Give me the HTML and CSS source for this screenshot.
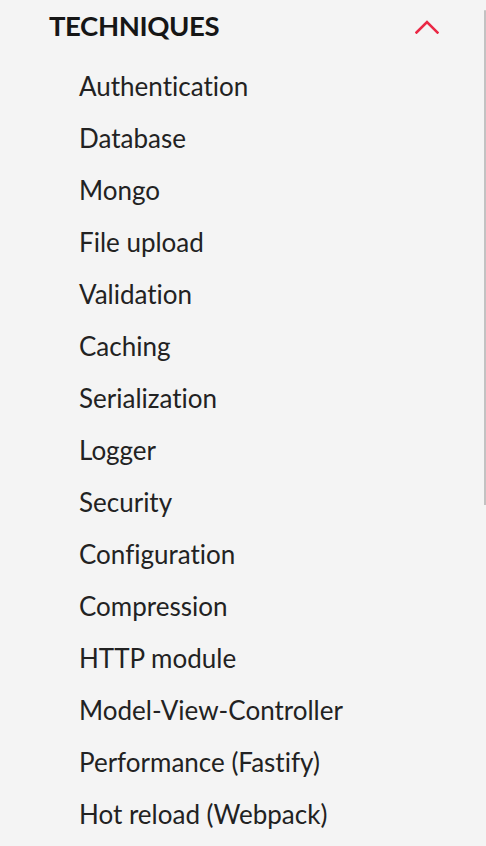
FILE: index.html
```html
<!DOCTYPE html>
<html lang="en">
<head>
<meta charset="utf-8">
<title>Techniques</title>
<link rel="stylesheet" href="styles.css">
</head>
<body>
<nav class="sidebar">
  <div class="section-head">
    <span class="section-title">TECHNIQUES</span>
    <svg class="chevron" width="24" height="14" viewBox="0 0 24 14" aria-hidden="true">
      <polyline points="1.5,12.5 12,2 22.5,12.5" fill="none" stroke="#ea2845" stroke-width="2.6" stroke-linecap="square"/>
    </svg>
  </div>
  <ul class="items">
    <li>Authentication</li>
    <li>Database</li>
    <li>Mongo</li>
    <li>File upload</li>
    <li>Validation</li>
    <li>Caching</li>
    <li>Serialization</li>
    <li>Logger</li>
    <li>Security</li>
    <li>Configuration</li>
    <li>Compression</li>
    <li>HTTP module</li>
    <li>Model-View-Controller</li>
    <li>Performance (Fastify)</li>
    <li>Hot reload (Webpack)</li>
  </ul>
</nav>
<div class="scroll-thumb"></div>
</body>
</html>
```
FILE: styles.css
```css
html, body {
  margin: 0;
  padding: 0;
  background: #f4f4f4;
}
body {
  font-family: "Lato", "Liberation Sans", sans-serif;
  font-variant-ligatures: none;
  overflow: hidden;
  height: 846px;
}
.sidebar {
  padding-left: 49px;
  padding-right: 47px;
}
.section-head {
  display: flex;
  align-items: center;
  justify-content: space-between;
  height: 52px;
}
.section-title {
  font-weight: 700;
  font-size: 27.5px;
  line-height: 52px;
  color: #161616;
  letter-spacing: -0.4px;
}
.chevron {
  display: block;
  margin-top: 2px;
}
.items {
  list-style: none;
  margin: 8px 0 0 0;
  padding: 0 0 0 30px;
}
.items li {
  font-size: 26px;
  line-height: 52px;
  color: #222222;
}
.scroll-thumb {
  position: absolute;
  right: 0;
  top: 10px;
  width: 2px;
  height: 495px;
  background: #c2c2c2;
  border-radius: 1px 1px 0 0;
}
```
